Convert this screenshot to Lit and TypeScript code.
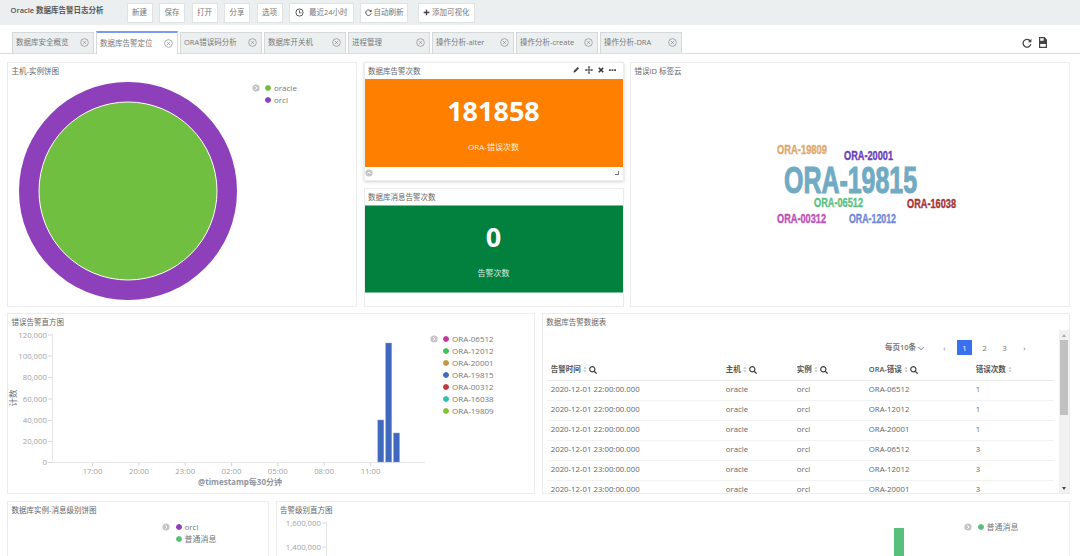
import { LitElement, css, html, svg } from "lit";
import { customElement } from "lit/decorators.js";

const TABS = ["数据库安全概览", "数据库告警定位", "ORA错误码分析", "数据库开关机", "进程管理", "操作分析-alter", "操作分析-create", "操作分析-DRA"];
const LEGEND_ERRORS = [
    ["ORA-06512", "#c0399f"],
    ["ORA-12012", "#3fbf5f"],
    ["ORA-20001", "#c09a3f"],
    ["ORA-19815", "#3f68bf"],
    ["ORA-00312", "#c0393f"],
    ["ORA-16038", "#35bfae"],
    ["ORA-19809", "#8abf3a"],
];
const CLOUD = [
    ["ORA-19809", 777, 154, 50, 12.5, "#e0a86e"],
    ["ORA-20001", 844, 160, 49, 12.5, "#6b3fb5"],
    ["ORA-19815", 784, 192.5, 133, 36, "#70abc3"],
    ["ORA-06512", 814, 207, 49, 12.5, "#5dbf83"],
    ["ORA-16038", 907, 208, 49, 12.5, "#a83335"],
    ["ORA-00312", 777, 222.5, 49, 12.5, "#bf4fb8"],
    ["ORA-12012", 849, 223, 47, 12.5, "#6f88d9"],
] as const;
const ROWS = [
    ["2020-12-01 22:00:00.000", "oracle", "orcl", "ORA-06512", "1"],
    ["2020-12-01 22:00:00.000", "oracle", "orcl", "ORA-12012", "1"],
    ["2020-12-01 22:00:00.000", "oracle", "orcl", "ORA-20001", "1"],
    ["2020-12-01 23:00:00.000", "oracle", "orcl", "ORA-06512", "3"],
    ["2020-12-01 23:00:00.000", "oracle", "orcl", "ORA-12012", "3"],
    ["2020-12-01 23:00:00.000", "oracle", "orcl", "ORA-20001", "3"],
];
const Y_TICKS = [
    ["120,000", 335],
    ["100,000", 356],
    ["80,000", 377.5],
    ["60,000", 399],
    ["40,000", 420.5],
    ["20,000", 441.5],
    ["0", 462.5],
] as const;
const X_TICKS = [
    ["17:00", 92.6],
    ["20:00", 138.9],
    ["23:00", 185.2],
    ["02:00", 231.5],
    ["05:00", 277.8],
    ["08:00", 324.1],
    ["11:00", 370.6],
] as const;
const BARS = [
    [377.8, 420],
    [385.7, 343],
    [393.5, 433],
];

const closeIcon = html`<svg class="tab-x" viewBox="0 0 10 10" width="9" height="9">
    <circle cx="5" cy="5" r="4.3" fill="none" stroke="#8d9192" stroke-width=".8"></circle>
    <path d="M3.2 3.2l3.6 3.6M6.8 3.2l-3.6 3.6" stroke="#8d9192" stroke-width=".8"></path>
</svg>`;
const clockIcon = html`<svg viewBox="0 0 10 10" width="9" height="9">
    <circle cx="5" cy="5" r="4" fill="none" stroke="#555" stroke-width="1.1"></circle>
    <path d="M5 2.6V5.4H7.2" fill="none" stroke="#555" stroke-width="1"></path>
</svg>`;
const refreshIcon = (size: number, color: string) => html`<svg viewBox="0 0 10 10" width=${size} height=${size}>
    <path d="M8.2 3A3.9 3.9 0 1 0 8.8 6.2" fill="none" stroke=${color} stroke-width="1.3"></path>
    <path d="M9.4 .8V4.2H6z" fill=${color}></path>
</svg>`;
const plusIcon = html`<svg viewBox="0 0 8 8" width="7" height="7"><path d="M4 .8v6.4M.8 4h6.4" stroke="#444" stroke-width="1.6"></path></svg>`;
const saveIcon = html`<svg viewBox="0 0 8 11" width="8" height="11">
    <path d="M0 0H5.5L8 2.5V11H0z" fill="#444"></path>
    <path d="M1.2 1.2H4.6V3.8H1.2zM1.2 7H6.8V9.8H1.2z" fill="#fff"></path>
</svg>`;
const pencilIcon = html`<svg viewBox="0 0 8 8" width="7" height="7"><path d="M.5 7.5L1 5.4 5.4 1 7 2.6 2.6 7z" fill="#444"></path></svg>`;
const moveIcon = html`<svg viewBox="0 0 9 9" width="8" height="8">
    <path d="M4.5 .5v8M.5 4.5h8" stroke="#444" stroke-width="1.1"></path>
    <path d="M4.5 0L6 1.8H3zM4.5 9L6 7.2H3zM0 4.5L1.8 3v3zM9 4.5L7.2 3v3z" fill="#444"></path>
</svg>`;
const crossIcon = html`<svg viewBox="0 0 8 8" width="6" height="6"><path d="M1 1l6 6M7 1L1 7" stroke="#333" stroke-width="2"></path></svg>`;
const dotsIcon = html`<svg viewBox="0 0 8 2" width="7" height="2"><path d="M0 0h2v2H0zM3 0h2v2H3zM6 0h2v2H6z" fill="#444"></path></svg>`;
const searchIcon = html`<svg viewBox="0 0 8 8" width="8" height="8">
    <circle cx="3.3" cy="3.3" r="2.6" fill="none" stroke="#444" stroke-width="1.2"></circle>
    <path d="M5.2 5.2L7.6 7.6" stroke="#444" stroke-width="1.3"></path>
</svg>`;
const sortIcon = html`<svg viewBox="0 0 5 8" width="4" height="7"><path d="M2.5 .5L4.5 3H.5zM2.5 7.5L.5 5h4z" fill="#c2c2c2"></path></svg>`;
const collapseIcon = html`<svg viewBox="0 0 8 8" width="8" height="8">
    <circle cx="4" cy="4" r="3.6" fill="#c4c4c4"></circle>
    <path d="M3.2 2.3L5 4 3.2 5.7" fill="none" stroke="#fff" stroke-width="1"></path>
</svg>`;
const expandIcon = html`<svg viewBox="0 0 8 8" width="8" height="8">
    <circle cx="4" cy="4" r="3.6" fill="#c4c4c4"></circle>
    <path d="M2.3 4.8L4 3l1.7 1.8" fill="none" stroke="#fff" stroke-width="1"></path>
</svg>`;

@customElement("app-root")
class AppRoot extends LitElement {
    static styles = css`
        :host {
            display: block;
            width: 1080px;
            height: 556px;
            overflow: hidden;
            background: #fff;
            color: #666;
            font: 7.5px/1.2 "Open Sans", "Noto Sans CJK SC", sans-serif;
        }

        .topbar {
            display: flex;
            align-items: center;
            gap: 6.5px;
            height: 25px;
            padding-left: 10.5px;
            background: #ebeff0;
        }
        .brand {
            flex: none;
            width: 109.5px;
            margin-top: -5px;
            font-weight: 600;
            color: #555;
        }
        .btn {
            display: flex;
            align-items: center;
            justify-content: center;
            flex: none;
            gap: 2px;
            height: 18px;
            padding: 0 4.5px;
            border: 1px solid #dfe3e4;
            background: #fff;
            color: #777;
            white-space: nowrap;
        }
        .btn.wide {
            padding: 0 5px;
            gap: 5px;
        }
        .btn.tight {
            padding: 0 3.5px;
        }
        .btn.last {
            margin-left: 3px;
        }

        .tabbar {
            display: flex;
            align-items: flex-end;
            gap: 2px;
            height: 28px;
            padding-left: 12px;
            border-bottom: 1px solid #d8dcdd;
        }
        .tab {
            display: flex;
            align-items: center;
            justify-content: space-between;
            box-sizing: border-box;
            width: 82px;
            height: 21.5px;
            padding: 0 4px 0 3px;
            border: 1px solid #d5d9da;
            border-bottom: none;
            background: #ebeff0;
            color: #777;
            white-space: nowrap;
        }
        .tab.active {
            height: 23.5px;
            margin-bottom: -1px;
            border-top: 2px solid #7b9cf0;
            background: #fff;
        }
        .tab-x {
            flex: none;
        }
        .tab-tools {
            display: flex;
            align-items: center;
            gap: 7px;
            margin-left: auto;
            padding: 0 33px 5px 0;
        }

        .rows {
            display: flex;
            flex-direction: column;
            gap: 6.5px;
            padding: 7.5px 10px 0 7px;
        }
        .row {
            display: flex;
            gap: 6.5px;
        }
        .row.a {
            height: 245px;
        }
        .row.b {
            height: 181px;
        }
        .row.c {
            height: 90px;
        }

        .panel {
            display: flex;
            flex-direction: column;
            box-sizing: border-box;
            border: 1px solid #ececec;
            background: #fff;
            overflow: hidden;
        }
        .title {
            display: flex;
            align-items: center;
            flex: none;
            box-sizing: border-box;
            height: 16px;
            padding: 1.5px 7px 0 3.5px;
            color: #666;
        }
        .actions {
            display: flex;
            align-items: center;
            gap: 5px;
            margin: -3px 0 0 auto;
        }
        .body {
            display: flex;
            flex: 1;
            min-height: 0;
        }
        .body > svg {
            display: block;
            flex: none;
        }

        .p-host {
            width: 350px;
        }
        .stats {
            display: flex;
            flex-direction: column;
            gap: 7px;
            width: 260px;
        }
        .stats .panel {
            flex: 1;
        }
        .stats .panel.hover {
            box-shadow: 0 1px 3px rgba(0, 0, 0, 0.18);
        }
        .p-cloud {
            flex: 1;
        }
        .p-half {
            flex: 1;
        }
        .p-inst {
            width: 262px;
        }
        .p-level {
            flex: 1;
        }

        .stat {
            display: flex;
            flex-direction: column;
            align-items: center;
            flex: none;
            height: 88px;
            padding-top: 12px;
            box-sizing: border-box;
            color: #fff;
        }
        .stat.orange {
            background: #ff8000;
        }
        .stat.green {
            padding-top: 11px;
            background: #01803e;
            border-top: 1px solid #7cbf9c;
            border-bottom: 1px solid #7cbf9c;
        }
        .stat-num {
            font-size: 27px;
            line-height: 40px;
            font-weight: 700;
        }
        .stat-label {
            margin-top: 10px;
            font-size: 8px;
            line-height: 12px;
            opacity: 0.85;
        }
        .stat-foot {
            display: flex;
            align-items: center;
            justify-content: space-between;
            flex: 1;
            padding: 0 4px 0 0;
        }
        .corner {
            width: 3px;
            height: 3px;
            border-right: 1px solid #777;
            border-bottom: 1px solid #777;
        }

        .legend {
            display: flex;
            gap: 5.5px;
            padding: 3px 0 0 1.5px;
            font-size: 8px;
            color: #777;
        }
        .legend-toggle {
            margin-top: 2px;
        }
        .legend-list {
            display: flex;
            flex-direction: column;
        }
        .legend-item {
            display: flex;
            align-items: center;
            gap: 3px;
            height: 12px;
            white-space: nowrap;
        }
        .dot {
            width: 6px;
            height: 6px;
            border-radius: 50%;
        }

        .table-area {
            flex: 1;
            min-width: 0;
            padding: 10px 5px 0 4px;
            overflow: hidden;
        }
        .pager {
            display: flex;
            align-items: center;
            justify-content: flex-end;
            gap: 5px;
            height: 15px;
            padding-right: 21.5px;
            color: #777;
            font-size: 8px;
        }
        .page-size {
            margin-right: 8px;
            font-size: 7.5px;
            font-weight: 600;
        }
        .page {
            width: 15px;
            line-height: 15px;
            text-align: center;
        }
        .page.on {
            background: #3a6ff0;
            color: #fff;
        }
        table {
            width: 100%;
            border-collapse: collapse;
            table-layout: fixed;
            font-size: 7.8px;
            color: #666;
        }
        th {
            height: 25px;
            box-sizing: border-box;
            padding: 5px 0 0 4px;
            border-bottom: 1px solid #e8e8e8;
            text-align: left;
            font-weight: 600;
            font-size: 7.5px;
            color: #555;
        }
        th span {
            display: inline-flex;
            align-items: center;
            gap: 2px;
        }
        td {
            height: 20px;
            box-sizing: border-box;
            padding: 0 0 0 4px;
            border-bottom: 1px solid #f2f2f2;
        }
        .scroll {
            display: flex;
            flex-direction: column;
            align-items: center;
            flex: none;
            width: 10px;
            background: #f1f1f1;
            margin-right: 0.5px;
        }
        .arrow {
            width: 0;
            height: 0;
            margin: 3.5px 0 3px;
            border-left: 2.5px solid transparent;
            border-right: 2.5px solid transparent;
        }
        .arrow.up {
            border-bottom: 3px solid #a8a8a8;
        }
        .arrow.down {
            margin-top: auto;
            border-top: 3px solid #444;
        }
        .thumb {
            width: 8px;
            height: 75px;
            background: #c1c1c1;
        }
    `;

    private legend(items: readonly (readonly string[])[]) {
        return html`<div class="legend">
            <div class="legend-toggle">${collapseIcon}</div>
            <div class="legend-list">
                ${items.map(
                    ([name, color]) => html`<div class="legend-item">
                        <svg class="dot" viewBox="0 0 6 6"><circle cx="3" cy="3" r="3" fill=${color}></circle></svg>
                        ${name}
                    </div>`,
                )}
            </div>
        </div>`;
    }

    private renderToolbar() {
        return html`<div class="topbar">
            <div class="brand">Oracle 数据库告警日志分析</div>
            ${["新建", "保存", "打开", "分享", "选项"].map(label => html`<div class="btn">${label}</div>`)}
            <div class="btn wide">${clockIcon}最近24小时</div>
            <div class="btn tight">${refreshIcon(7, "#444")}自动刷新</div>
            <div class="btn last">${plusIcon}添加可视化</div>
        </div>`;
    }

    private renderTabs() {
        return html`<div class="tabbar">
            ${TABS.map((name, i) => html`<div class="tab ${i === 1 ? "active" : ""}"><span>${name}</span>${closeIcon}</div>`)}
            <div class="tab-tools">${refreshIcon(10, "#444")}${saveIcon}</div>
        </div>`;
    }

    private renderHostPie() {
        return html`<div class="panel p-host">
            <div class="title">主机-实例饼图</div>
            <div class="body">
                <svg width="242" height="227" viewBox="8 79 242 227">
                    <circle cx="128" cy="191" r="109" fill="#8e3fba"></circle>
                    <circle cx="128" cy="191" r="89" fill="#70bf41" stroke="#fff" stroke-width="1"></circle>
                </svg>
                ${this.legend([
                    ["oracle", "#70bf41"],
                    ["orcl", "#8e3fba"],
                ])}
            </div>
        </div>`;
    }

    private renderStats() {
        return html`<div class="stats">
            <div class="panel hover">
                <div class="title">
                    数据库告警次数
                    <div class="actions">${pencilIcon}${moveIcon}${crossIcon}${dotsIcon}</div>
                </div>
                <div class="stat orange">
                    <div class="stat-num">181858</div>
                    <div class="stat-label">ORA-错误次数</div>
                </div>
                <div class="stat-foot">${expandIcon}<div class="corner"></div></div>
            </div>
            <div class="panel">
                <div class="title">数据库消息告警次数</div>
                <div class="stat green">
                    <div class="stat-num">0</div>
                    <div class="stat-label">告警次数</div>
                </div>
            </div>
        </div>`;
    }

    private renderCloud() {
        return html`<div class="panel p-cloud">
            <div class="title">错误ID 标签云</div>
            <div class="body">
                <svg width="438" height="227" viewBox="631 79 438 227">
                    ${CLOUD.map(
                        ([word, x, y, w, size, color]) => svg`<text x=${x} y=${y} font-size=${size} textLength=${w}
                            lengthAdjust="spacingAndGlyphs" fill=${color} stroke=${color} stroke-width=${size * 0.03} font-weight="700"
                            font-family="'Liberation Sans Narrow','Liberation Sans',sans-serif">${word}</text>`,
                    )}
                </svg>
            </div>
        </div>`;
    }

    private renderHistogram() {
        return html`<div class="panel p-half">
            <div class="title">错误告警直方图</div>
            <div class="body">
                <svg width="420" height="164" viewBox="8 330 420 164" font-size="7.8" fill="#a3a3a3">
                    <path d="M52.5 333V463M52 462.5H425" fill="none" stroke="#e6e6e6"></path>
                    ${Y_TICKS.map(
                        ([label, y]) => svg`<path d="M48 ${y}H52" stroke="#d8d8d8"></path>
                            <text x="47" y=${y + 2.8} text-anchor="end">${label}</text>`,
                    )}
                    ${X_TICKS.map(
                        ([label, x]) => svg`<path d="M${x} 463V466" stroke="#d8d8d8"></path>
                            <text x=${x} y="473.5" text-anchor="middle">${label}</text>`,
                    )}
                    ${BARS.map(
                        ([x, y]) => svg`<rect x=${x} y=${y} width="6" height=${462 - y} fill="#3f68bf" stroke="#8aa3dc" stroke-width=".5"></rect>`,
                    )}
                    <text x="240" y="485" text-anchor="middle" font-weight="700" font-size="8" fill="#8f96a0">@timestamp每30分钟</text>
                    <text transform="translate(16 398) rotate(-90)" text-anchor="middle" font-size="8.5" fill="#777">计数</text>
                </svg>
                ${this.legend(LEGEND_ERRORS)}
            </div>
        </div>`;
    }

    private renderTable() {
        const heads = ["告警时间", "主机", "实例", "ORA-错误", "错误次数"];
        return html`<div class="panel p-half">
            <div class="title">数据库告警数据表</div>
            <div class="body">
                <div class="table-area">
                    <div class="pager">
                        <span class="page-size">每页10条 ⌵</span>
                        <span class="page">‹</span>
                        <span class="page on">1</span>
                        <span class="page">2</span>
                        <span class="page">3</span>
                        <span class="page">›</span>
                    </div>
                    <table>
                        <colgroup>
                            <col width="175" />
                            <col width="71" />
                            <col width="72" />
                            <col width="107" />
                            <col />
                        </colgroup>
                        <thead>
                            <tr>
                                ${heads.map(
                                    (h, i) => html`<th><span>${h} ${sortIcon}${i < 4 ? searchIcon : ""}</span></th>`,
                                )}
                            </tr>
                        </thead>
                        <tbody>
                            ${ROWS.map(row => html`<tr>${row.map(cell => html`<td>${cell}</td>`)}</tr>`)}
                        </tbody>
                    </table>
                </div>
                <div class="scroll">
                    <div class="arrow up"></div>
                    <div class="thumb"></div>
                    <div class="arrow down"></div>
                </div>
            </div>
        </div>`;
    }

    private renderBottom() {
        const normal = ["普通消息", "#57c17b"];
        return html`<div class="row c">
            <div class="panel p-inst">
                <div class="title">数据库实例-消息级别饼图</div>
                <div class="body">
                    <svg width="152.5" height="60"></svg>
                    ${this.legend([["orcl", "#8e3fba"], normal])}
                </div>
            </div>
            <div class="panel p-level">
                <div class="title">告警级别直方图</div>
                <div class="body">
                    <svg width="686" height="72" viewBox="276 518 686 72" font-size="7.8" fill="#a3a3a3">
                        <path d="M325.5 521V590" fill="none" stroke="#e6e6e6"></path>
                        <path d="M321 523H325M321 547H325" stroke="#d8d8d8"></path>
                        <text x="320" y="526" text-anchor="end">1,600,000</text>
                        <text x="320" y="550" text-anchor="end">1,400,000</text>
                        <rect x="893" y="528" width="10" height="62" fill="#57c17b"></rect>
                    </svg>
                    ${this.legend([normal])}
                </div>
            </div>
        </div>`;
    }

    protected render() {
        return html`
            ${this.renderToolbar()} ${this.renderTabs()}
            <div class="rows">
                <div class="row a">${this.renderHostPie()} ${this.renderStats()} ${this.renderCloud()}</div>
                <div class="row b">${this.renderHistogram()} ${this.renderTable()}</div>
                ${this.renderBottom()}
            </div>
        `;
    }
}

declare global {
    interface HTMLElementTagNameMap {
        "app-root": AppRoot;
    }
}
